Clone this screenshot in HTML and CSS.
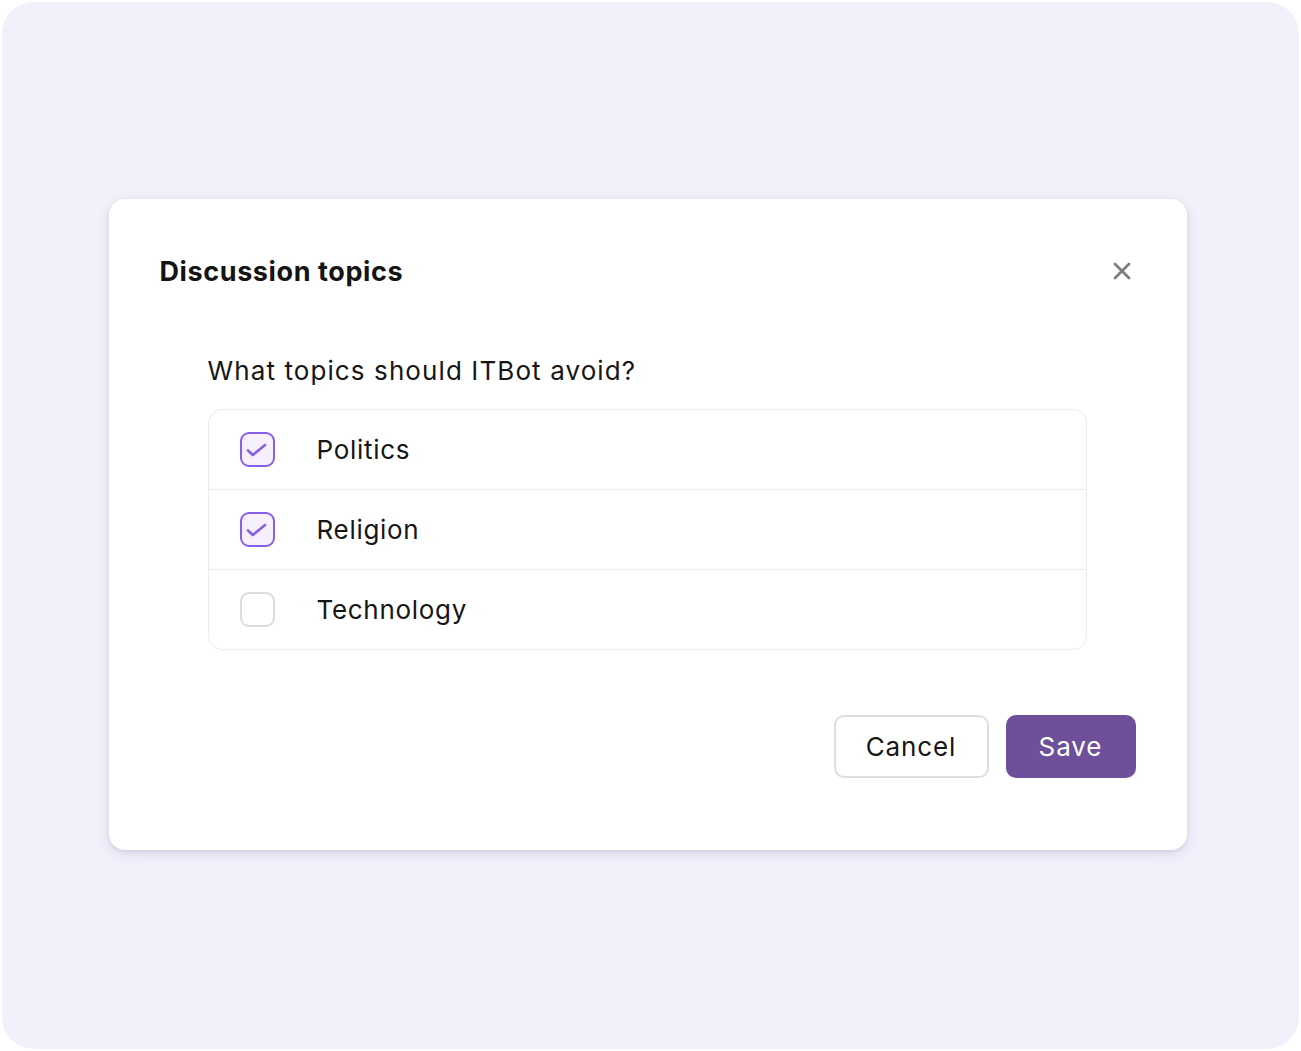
FILE: index.html
```html
<!DOCTYPE html>
<html lang="en">
<head>
    <meta charset="UTF-8">
    <meta name="viewport" content="width=device-width, initial-scale=1.0">
    <title>Discussion topics</title>
    <link rel="stylesheet" href="styles.css">
</head>
<body>
    <div class="backdrop">
        <div class="modal">
            <div class="modal-header">
                <h2 class="modal-title">Discussion topics</h2>
                <button class="close" aria-label="Close">
                    <svg width="18" height="18" viewBox="0 0 18 18">
                        <path d="M2 2L16 16M16 2L2 16" stroke="#7d7d7d" stroke-width="2.8" stroke-linecap="round"/>
                    </svg>
                </button>
            </div>

            <p class="question">What topics should ITBot avoid?</p>

            <ul class="topics">
                <li class="topic">
                    <span class="check checked">
                        <svg width="35" height="35" viewBox="0 0 35 35"><path d="M9 18.5L13.8 23L26 13" fill="none" stroke="#8a5fe8" stroke-width="2.6" stroke-linecap="round" stroke-linejoin="round"/></svg>
                    </span>
                    <span class="label">Politics</span>
                </li>
                <li class="topic">
                    <span class="check checked">
                        <svg width="35" height="35" viewBox="0 0 35 35"><path d="M9 18.5L13.8 23L26 13" fill="none" stroke="#8a5fe8" stroke-width="2.6" stroke-linecap="round" stroke-linejoin="round"/></svg>
                    </span>
                    <span class="label">Religion</span>
                </li>
                <li class="topic">
                    <span class="check"></span>
                    <span class="label">Technology</span>
                </li>
            </ul>

            <div class="actions">
                <button class="btn btn-cancel">Cancel</button>
                <button class="btn btn-save">Save</button>
            </div>
        </div>
    </div>
</body>
</html>
```

FILE: styles.css
```css
* {
    box-sizing: border-box;
}

body {
    margin: 0;
    background-color: #ffffff;
    font-family: 'Inter', 'Noto Sans', sans-serif;
    color: #161616;
}

.backdrop {
    margin: 2px;
    height: 1047px;
    padding: 0 6px 2px 0;
    background-color: #f2f0fb;
    border-radius: 32px;
    display: flex;
    justify-content: center;
    align-items: center;
}

.modal {
    width: 1078px;
    background-color: #fff;
    border-radius: 16px;
    padding: 48px 51px 72px;
    box-shadow: 0 2px 4px rgba(40, 30, 80, 0.08), 0 4px 14px rgba(40, 30, 80, 0.1);
}

.modal-header {
    height: 48px;
    display: flex;
    align-items: center;
    justify-content: space-between;
}

.modal-title {
    margin: 0;
    font-size: 27px;
    font-weight: 700;
    letter-spacing: 0.6px;
    color: #141414;
}

.close {
    background: none;
    border: none;
    padding: 0;
    margin-right: 5px;
    width: 18px;
    height: 18px;
    cursor: pointer;
    display: flex;
}

.question {
    margin: 60px 48px 22px;
    font-size: 26px;
    line-height: 32px;
    letter-spacing: 1.1px;
    color: #161616;
}

.topics {
    list-style: none;
    margin: 0 49px 0 48px;
    padding: 0;
    border: 1px solid #ececf0;
    border-radius: 14px;
}

.topic {
    height: 79px;
    display: flex;
    align-items: center;
    padding-left: 31px;
    gap: 42px;
}

.topic + .topic {
    border-top: 1px solid #ececf0;
    height: 80px;
}

.check {
    width: 35px;
    height: 35px;
    border: 2.5px solid #dcdcdf;
    border-radius: 9px;
    background-color: #fff;
    display: flex;
}

.check svg {
    margin: -2.5px;
}

.check.checked {
    border-color: #8a5fe8;
    background-color: #f6effe;
}

.label {
    font-size: 26px;
    letter-spacing: 0.7px;
    color: #161616;
}

.actions {
    margin-top: 65px;
    display: flex;
    justify-content: flex-end;
    gap: 17px;
}

.btn {
    height: 63px;
    border-radius: 10px;
    font-family: 'Inter', 'Noto Sans', sans-serif;
    font-size: 26px;
    letter-spacing: 0.9px;
    cursor: pointer;
}

.btn-cancel {
    width: 155px;
    background-color: #fff;
    border: 2px solid #dedde2;
    color: #161616;
}

.btn-save {
    width: 130px;
    background-color: #6d4f9a;
    border: none;
    color: #fff;
}
```
